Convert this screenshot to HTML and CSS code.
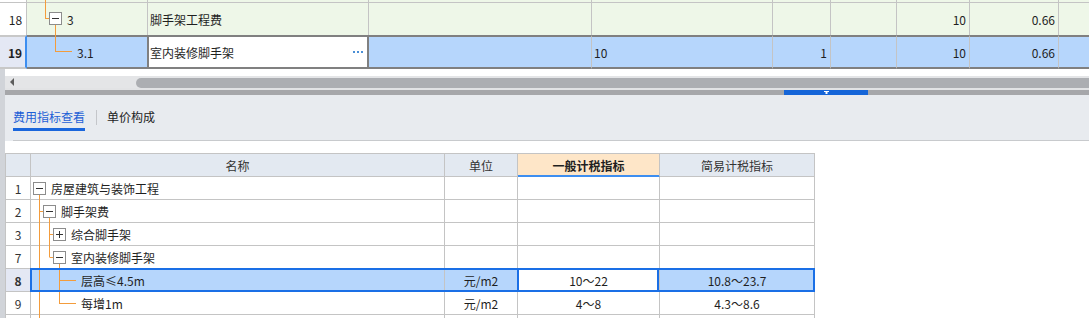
FILE: index.html
```html
<!DOCTYPE html>
<html lang="zh">
<head>
<meta charset="utf-8">
<title>费用指标查看</title>
<link rel="stylesheet" href="styles.css">
</head>
<body>
<div class="page">
  <div class="top">
    <div class="trow prev">
      <div class="c c0"></div><div class="c c1"></div><div class="c c2"></div><div class="c c3"></div><div class="c c4"></div><div class="c c5"></div><div class="c c6"></div><div class="c c7"></div><div class="c c8"></div><div class="c c9"></div>
    </div>
    <div class="trow r18">
      <div class="c c0 rn">18</div>
      <div class="c c1">
        <svg class="tt t18" width="40" height="35" viewBox="0 0 40 35">
          <path d="M18.5 0V18.5M18 18.5H22M28.5 25V35" stroke="#f39c3c" fill="none"/>
          <rect x="22.5" y="12.5" width="12" height="12" fill="#fff" stroke="#8c8c8c"/>
          <path d="M25 18.5H32" stroke="#333"/>
        </svg>
        <span class="tx">3</span>
      </div>
      <div class="c c2 pl">脚手架工程费</div>
      <div class="c c3"></div><div class="c c4"></div><div class="c c5"></div><div class="c c6"></div>
      <div class="c c7 r">10</div><div class="c c8 r">0.66</div><div class="c c9"></div>
    </div>
    <div class="trow r19">
      <div class="c c0 rn">19</div>
      <div class="c c1">
        <svg class="tt t19" width="50" height="32" viewBox="0 0 50 32">
          <path d="M28.5 0V17M29 16.5H45" stroke="#f39c3c" fill="none"/>
        </svg>
        <span class="tx">3.1</span>
      </div>
      <div class="c c2 edit">室内装修脚手架<span class="dots"><i></i><i></i><i></i></span></div>
      <div class="c c3"></div><div class="c c4 pl">10</div><div class="c c5 r">1</div><div class="c c6"></div>
      <div class="c c7 r">10</div><div class="c c8 r">0.66</div><div class="c c9"></div>
    </div>
  </div>

  <div class="lower">
    <div class="strip"></div>
    <div class="main">
      <div class="gap"></div>
      <div class="hscroll"><span class="arrow"></span><span class="thumb"></span></div>
      <div class="sep2"></div>
      <div class="splitter"><span class="grip"><svg width="5" height="4" viewBox="0 0 5 4"><path d="M0 0H5V1H3.5V3H1.5V1H0Z" fill="#fff"/></svg></span></div>
      <div class="panel">
        <div class="tabs">
          <span class="tab active">费用指标查看</span>
          <span class="tsep"></span>
          <span class="tab">单价构成</span>
        </div>
      </div>
      <div class="content">
        <div class="grid">
          <div class="grow ghead">
            <div class="g g0"></div>
            <div class="g g1 cen">名称</div>
            <div class="g g2 cen">单位</div>
            <div class="g g3 cen hl">一般计税指标</div>
            <div class="g g4 cen">简易计税指标</div>
          </div>
          <div class="grow">
            <div class="g g0">1</div>
            <div class="g g1">
              <svg class="lt" width="20" height="22" viewBox="0 0 20 22">
                <path d="M8.5 18V23" stroke="#f39c3c" fill="none"/>
                <rect x="2.5" y="5.5" width="12" height="12" fill="#fff" stroke="#8c8c8c"/>
                <path d="M5 11.5H12" stroke="#333"/>
              </svg>
              <span>房屋建筑与装饰工程</span>
            </div>
            <div class="g g2"></div><div class="g g3"></div><div class="g g4"></div>
          </div>
          <div class="grow">
            <div class="g g0">2</div>
            <div class="g g1">
              <svg class="lt" width="30" height="22" viewBox="0 0 30 22">
                <path d="M8.5 -1V23M9 11.5H12M18.5 18V23" stroke="#f39c3c" fill="none"/>
                <rect x="12.5" y="5.5" width="12" height="12" fill="#fff" stroke="#8c8c8c"/>
                <path d="M15 11.5H22" stroke="#333"/>
              </svg>
              <span>脚手架费</span>
            </div>
            <div class="g g2"></div><div class="g g3"></div><div class="g g4"></div>
          </div>
          <div class="grow">
            <div class="g g0">3</div>
            <div class="g g1">
              <svg class="lt" width="40" height="22" viewBox="0 0 40 22">
                <path d="M8.5 -1V23M18.5 -1V23M19 11.5H22" stroke="#f39c3c" fill="none"/>
                <rect x="22.5" y="5.5" width="12" height="12" fill="#fff" stroke="#8c8c8c"/>
                <path d="M25 11.5H32M28.5 8V15" stroke="#333"/>
              </svg>
              <span>综合脚手架</span>
            </div>
            <div class="g g2"></div><div class="g g3"></div><div class="g g4"></div>
          </div>
          <div class="grow">
            <div class="g g0">7</div>
            <div class="g g1">
              <svg class="lt" width="40" height="22" viewBox="0 0 40 22">
                <path d="M8.5 -1V23M18.5 -1V11.5M19 11.5H22M28.5 18V23" stroke="#f39c3c" fill="none"/>
                <rect x="22.5" y="5.5" width="12" height="12" fill="#fff" stroke="#8c8c8c"/>
                <path d="M25 11.5H32" stroke="#333"/>
              </svg>
              <span>室内装修脚手架</span>
            </div>
            <div class="g g2"></div><div class="g g3"></div><div class="g g4"></div>
          </div>
          <div class="grow sel">
            <div class="g g0 b">8</div>
            <div class="g g1">
              <svg class="lt" width="50" height="22" viewBox="0 0 50 22">
                <path d="M8.5 -1V23M28.5 -1V23M29 11.5H45" stroke="#f39c3c" fill="none"/>
              </svg>
              <span>层高≤4.5m</span>
            </div>
            <div class="g g2 cen">元/m2</div>
            <div class="g g3 cen focus">10～22</div>
            <div class="g g4 cen">10.8～23.7</div>
          </div>
          <div class="grow">
            <div class="g g0">9</div>
            <div class="g g1">
              <svg class="lt" width="50" height="22" viewBox="0 0 50 22">
                <path d="M8.5 -1V23M28.5 -1V12M29 11.5H45" stroke="#f39c3c" fill="none"/>
              </svg>
              <span>每增1m</span>
            </div>
            <div class="g g2 cen">元/m2</div>
            <div class="g g3 cen">4～8</div>
            <div class="g g4 cen">4.3～8.6</div>
          </div>
          <div class="grow">
            <div class="g g0"></div>
            <div class="g g1">
              <svg class="lt" width="20" height="22" viewBox="0 0 20 22">
                <path d="M8.5 -1V23" stroke="#f39c3c" fill="none"/>
              </svg>
            </div>
            <div class="g g2"></div><div class="g g3"></div><div class="g g4"></div>
          </div>
        </div>
      </div>
    </div>
  </div>
</div>
</body>
</html>
```

FILE: styles.css
```css
html, body {
  margin: 0;
  padding: 0;
}
body {
  font-family: "Noto Sans CJK SC", "Noto Sans", sans-serif;
  font-size: 12px;
  color: #1f1f1f;
  background: #fff;
  overflow: hidden;
}
.page {
  width: 1089px;
  height: 318px;
  overflow: hidden;
}

/* ---------- top grid ---------- */
.trow {
  display: flex;
}
.c {
  box-sizing: border-box;
  flex: none;
  border-right: 1px solid #c4c4c4;
  display: flex;
  align-items: center;
  background: #eef7e8;
  white-space: nowrap;
}
.c0 { width: 27px; background: #fff; padding-left: 5px; justify-content: center; }
.c1 { width: 121px; }
.c2 { width: 221px; }
.c3 { width: 223px; }
.c4 { width: 181px; }
.c5 { width: 58px; }
.c6 { width: 66px; }
.c7 { width: 73px; }
.c8 { width: 89px; }
.c9 { flex: 1; border-right: none; }
.r { justify-content: flex-end; padding-right: 3px; }
.pl { padding-left: 2px; }

.prev .c {
  height: 3px;
  border-bottom: 1px solid #c4c4c4;
}
.r18 .c {
  height: 32px;
}
.r18 .c0 { background: #fff; }

.r19 .c {
  height: 34px;
  background: #b6d6fc;
  border-top: 2px solid #808080;
  border-bottom: 2px solid #808080;
}
.r19 .c0 {
  background: #e4e8f4;
  font-weight: bold;
  border-top-color: #c8c8c8;
  border-bottom-color: #c8c8c8;
  border-right: 2px solid #3d8ef0;
}
.r19 .c1 { border-right-color: #808080; }
.r19 .edit {
  background: #fff;
  border-left: 1px solid #808080;
  border-right: 2px solid #808080;
  padding-left: 1px;
}
.dots {
  margin-left: auto;
  margin-right: 4px;
  display: flex;
  gap: 2px;
}
.dots i {
  display: block;
  width: 2px;
  height: 2px;
  background: #4a8fd6;
}

.tt {
  overflow: visible;
  flex: none;
  align-self: flex-start;
}
.t18 { margin-top: -3px; }
.t19 { margin-top: -2px; }
.tx { white-space: nowrap; }

/* ---------- lower area ---------- */
.lower {
  display: flex;
}
.strip {
  width: 5px;
  flex: none;
  background: #d1d4d9;
}
.main {
  flex: 1;
  display: flex;
  flex-direction: column;
}
.main > * {
  flex: none;
}
.gap {
  height: 7px;
  background: #fff;
}
.hscroll {
  height: 12px;
  background: #e4e5e7;
  display: flex;
  align-items: flex-start;
}
.arrow {
  width: 0;
  height: 0;
  border-top: 4px solid transparent;
  border-bottom: 4px solid transparent;
  border-right: 4px solid #5c5c5c;
  margin: 2px 0 0 5px;
}
.thumb {
  flex: 1;
  height: 10px;
  margin: 2px 0 0 122px;
  background: #acaeb2;
  border-radius: 5px 0 0 5px;
}
.sep2 {
  height: 2px;
  background: #e2e3e5;
}
.splitter {
  height: 5px;
  background: #a6a7aa;
  display: flex;
}
.grip {
  margin-left: 779px;
  width: 84px;
  background: #1565d8;
  display: flex;
  justify-content: center;
  align-items: flex-start;
}
.grip svg {
  margin-top: 1px;
}
.panel {
  background: #e8ebef;
  height: 46px;
}
.tabs {
  margin-left: 8px;
  height: 46px;
  box-sizing: border-box;
  border-bottom: 1px solid #c8cacd;
  display: flex;
  align-items: flex-start;
  padding-top: 13px;
}
.tab {
  line-height: 17px;
  padding-bottom: 3px;
  color: #222;
  white-space: nowrap;
}
.tab.active {
  color: #1d5fd6;
  border-bottom: 3px solid #1a66dc;
}
.tsep {
  width: 1px;
  height: 15px;
  background: #c4c6ca;
  margin: 2px 10px 0 11px;
}
.content {
  background: #fff;
  padding-top: 12px;
}

/* ---------- lower grid ---------- */
.grow {
  display: flex;
  height: 23px;
}
.g {
  box-sizing: border-box;
  flex: none;
  height: 23px;
  border-right: 1px solid #c4c4c4;
  border-bottom: 1px solid #c4c4c4;
  display: flex;
  align-items: center;
  background: #fff;
  color: #1f1f1f;
  white-space: nowrap;
}
.g0 { width: 26px; border-left: 1px solid #c4c4c4; justify-content: center; color: #333; }
.g1 { width: 414px; }
.g2 { width: 73px; }
.g3 { width: 142px; }
.g4 { width: 155px; }
.cen { justify-content: center; }
.b { font-weight: bold; }

.ghead { height: 24px; }
.ghead .g {
  height: 24px;
  border-top: 1px solid #c4c4c4;
  background: #e3e9f1;
  color: #333;
}
.ghead .g0 { background: #e3e9f1; }
.ghead .hl {
  background: #fee6c8;
  font-weight: bold;
  color: #1f1f1f;
  border-bottom-color: #3d8ef0;
  box-shadow: inset 0 -1px 0 #3d8ef0;
}

.lt {
  overflow: visible;
  flex: none;
  align-self: flex-start;
}

.sel {
  position: relative;
}
.sel .g { background: #b6d6fc; }
.sel .g0 { background: #e4e8f4; }
.sel .focus {
  background: #fff;
  position: relative;
}
.sel::after {
  content: "";
  position: absolute;
  left: 25px;
  top: -1px;
  width: 785px;
  height: 24px;
  box-sizing: border-box;
  border: 2px solid #1a6fe6;
  pointer-events: none;
}
.sel .focus::after {
  content: "";
  position: absolute;
  left: -1px;
  right: 0;
  top: -1px;
  bottom: -1px;
  border-left: 2px solid #1a6fe6;
  border-right: 2px solid #1a6fe6;
  pointer-events: none;
}
```
